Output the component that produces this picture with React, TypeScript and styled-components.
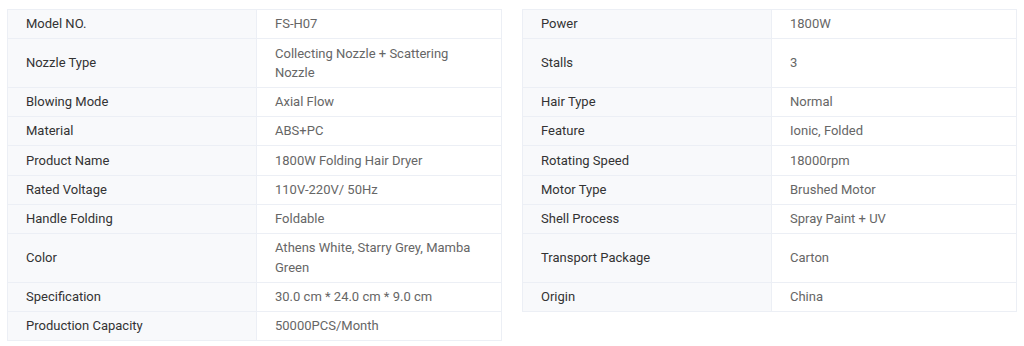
import React from 'react';
import styled, { createGlobalStyle } from 'styled-components';

const GlobalStyle = createGlobalStyle`
  body {
    margin: 0;
    background: #fff;
    font-family: Roboto, "Liberation Sans", Arial, sans-serif;
  }
`

const SpecsPage = styled.div`
  display: grid;
  grid-template-columns: 495px 495px;
  column-gap: 20px;
  align-items: start;
  padding: 9px 7px;
`

const SpecTable = styled.table`
  width: 100%;
  border-collapse: collapse;
  table-layout: fixed;
  border: 1px solid #eceff5;
`

const SpecRow = styled.tr<{ $tall?: boolean }>`
  border-bottom: 1px solid #eceff5;
  height: ${p => (p.$tall ? '48.5px' : '29.25px')};
`

const LabelCell = styled.td`
  box-sizing: border-box;
  width: 249px;
  padding: 4px 18px;
  background: #f8f9fb;
  border-right: 1px solid #eceff5;
  color: #333;
  font-size: 13px;
  line-height: 19.5px;
  vertical-align: middle;
`

const ValueCell = styled.td`
  padding: 4px 18px;
  background: #fff;
  color: #666;
  font-size: 13px;
  line-height: 19.5px;
  vertical-align: middle;
`

type Spec = [string, string]

const leftSpecs: Spec[] = [
  ['Model NO.', 'FS-H07'],
  ['Nozzle Type', 'Collecting Nozzle + Scattering Nozzle'],
  ['Blowing Mode', 'Axial Flow'],
  ['Material', 'ABS+PC'],
  ['Product Name', '1800W Folding Hair Dryer'],
  ['Rated Voltage', '110V-220V/ 50Hz'],
  ['Handle Folding', 'Foldable'],
  ['Color', 'Athens White, Starry Grey, Mamba Green'],
  ['Specification', '30.0 cm * 24.0 cm * 9.0 cm'],
  ['Production Capacity', '50000PCS/Month'],
]

// right column rows 2 and 8 sit next to the two-line rows on the left
const rightSpecs: Spec[] = [
  ['Power', '1800W'],
  ['Stalls', '3'],
  ['Hair Type', 'Normal'],
  ['Feature', 'Ionic, Folded'],
  ['Rotating Speed', '18000rpm'],
  ['Motor Type', 'Brushed Motor'],
  ['Shell Process', 'Spray Paint + UV'],
  ['Transport Package', 'Carton'],
  ['Origin', 'China'],
]

const tallRows = [1, 7]

function Specs({ rows }: { rows: Spec[] }) {
  return (
    <SpecTable>
      <tbody>
        {rows.map(([label, value], i) => (
          <SpecRow key={label} $tall={tallRows.includes(i)}>
            <LabelCell>{label}</LabelCell>
            <ValueCell>{value}</ValueCell>
          </SpecRow>
        ))}
      </tbody>
    </SpecTable>
  )
}

export default function App() {
  return (
    <>
      <GlobalStyle />
      <SpecsPage>
        <Specs rows={leftSpecs} />
        <Specs rows={rightSpecs} />
      </SpecsPage>
    </>
  )
}
